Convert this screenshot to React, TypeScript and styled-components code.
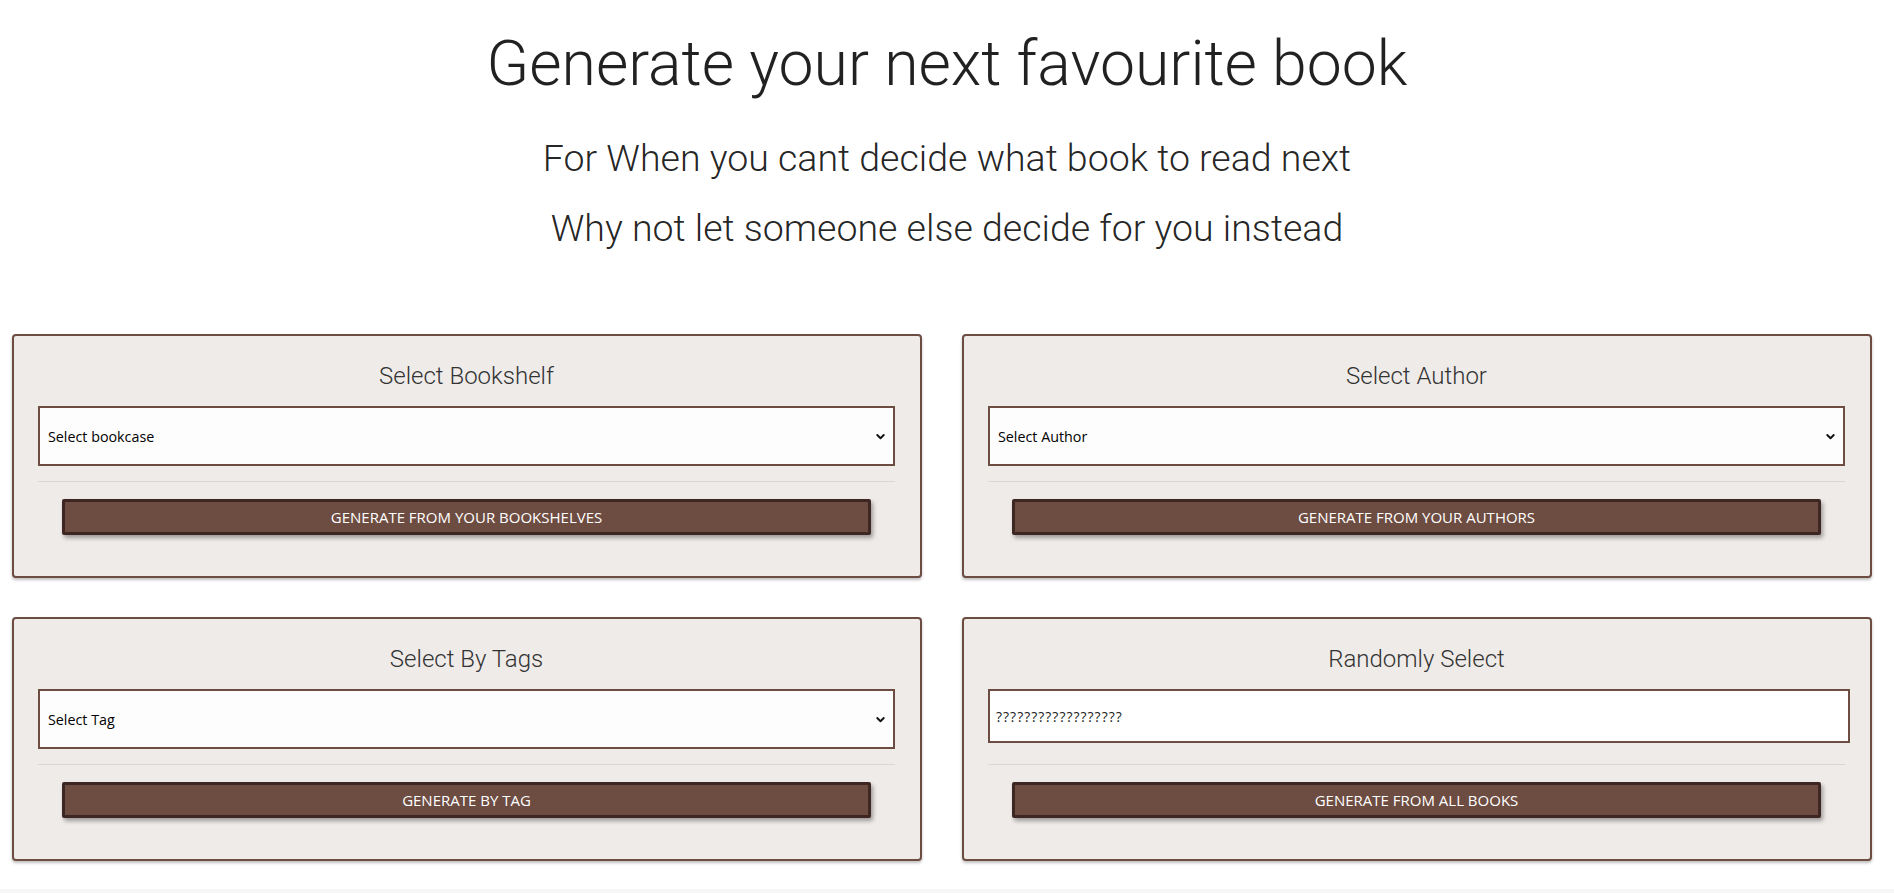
import React from 'react';
import styled, {createGlobalStyle} from 'styled-components';
import {ChevronDown} from 'lucide-react';

type GeneratorCardProps = {
    title: string
    button: string
    placeholder: string
    kind?: 'select' | 'input'
}

function GeneratorCard(props: GeneratorCardProps) {
    return (
        <Card>
            <CardTitle>{ props.title }</CardTitle>
            {props.kind === 'input' ? (
                <RandomInput defaultValue={props.placeholder} />
            ) : (
                <SelectWrap>
                    <Select defaultValue="">
                        <option value="">{ props.placeholder }</option>
                    </Select>
                    <Arrow><ChevronDown size={13} strokeWidth={3.5} /></Arrow>
                </SelectWrap>
            )}
            <Divider />
            <GenerateButton>{ props.button }</GenerateButton>
        </Card>
    );
}

export default function App() {
    return (
        <>
            <GlobalStyle />
            <Header>
                <Title>Generate your next favourite book</Title>
                <Subtitle>For When you cant decide what book to read next</Subtitle>
                <Subtitle>Why not let someone else decide for you instead</Subtitle>
            </Header>
            <Grid>
                <GeneratorCard title="Select Bookshelf" placeholder="Select bookcase" button="Generate from your bookshelves" />
                <GeneratorCard title="Select Author" placeholder="Select Author" button="Generate from your authors" />
                <GeneratorCard title="Select By Tags" placeholder="Select Tag" button="Generate by tag" />
                <GeneratorCard title="Randomly Select" placeholder="??????????????????" button="Generate from all books" kind="input" />
            </Grid>
            <Footer />
        </>
    );
}

const GlobalStyle = createGlobalStyle`
  html, body {
    margin: 0;
    background: #fff;
    overflow: hidden;
  }
  body {
    font-family: Roboto, "Noto Sans", sans-serif;
    color: rgba(0, 0, 0, 0.87);
  }
`

const Header = styled.header`
  padding-top: 30px;
  text-align: center;
`

const Title = styled.h1`
  margin: 0 0 25px;
  font-size: 62.5px;
  line-height: 68px;
  font-weight: 300;
`

const Subtitle = styled.p`
  margin: 0;
  font-size: 37.5px;
  line-height: 70px;
  font-weight: 300;
`

const Grid = styled.main`
  display: grid;
  grid-template-columns: 1fr 1fr;
  column-gap: 40px;
  row-gap: 39px;
  align-items: start;
  padding: 0 22px 0 12px;
  margin-top: 71px;
`

const Card = styled.section`
  padding: 22px 25px 41px 24px;
  background: #efebe9;
  border: 2px solid #6d4c41;
  border-radius: 4px;
  box-shadow: 0 2px 3px rgba(0, 0, 0, 0.25);
`

const CardTitle = styled.h4`
  margin: 0 0 12px;
  font-size: 24px;
  line-height: 36px;
  font-weight: 300;
  text-align: center;
  color: #333;
`

const SelectWrap = styled.div`
  position: relative;
`

const Select = styled.select`
  display: block;
  width: 100%;
  height: 60px;
  padding: 0 30px 0 8px;
  box-sizing: border-box;
  appearance: none;
  background: #fdfdfd;
  border: 2px solid #6d4c41;
  border-radius: 0;
  outline: none;
  font-family: "Open Sans", sans-serif;
  font-size: 14.3px;
  color: #000;
`

const Arrow = styled.span`
  position: absolute;
  right: 8px;
  top: 50%;
  transform: translateY(-45%);
  display: flex;
  color: #111;
  pointer-events: none;
`

const RandomInput = styled.input`
  display: block;
  width: calc(100% + 5px);
  height: 54px;
  margin: 0 -5px 21px 0;
  padding: 0 6px;
  box-sizing: border-box;
  background: #fff;
  border: 2px solid #6d4c41;
  outline: none;
  font-family: "Open Sans", sans-serif;
  font-size: 14px;
  letter-spacing: 1px;
  color: #222;
`

const Divider = styled.hr`
  margin: 15px 0 17px;
  border: none;
  border-top: 1px solid #dcd6d3;
`

const GenerateButton = styled.button`
  display: block;
  width: calc(100% - 48px);
  height: 36px;
  margin: 0 24px;
  background: #6d4c41;
  border: 3px solid #3e2723;
  border-radius: 2px;
  box-shadow: 2px 3px 4px rgba(0, 0, 0, 0.35);
  color: #fff;
  font-family: "Open Sans", sans-serif;
  font-size: 15px;
  text-transform: uppercase;
  cursor: pointer;
`

const Footer = styled.footer`
  height: 100px;
  margin-top: 28px;
  background: #f7f7f7;
`
